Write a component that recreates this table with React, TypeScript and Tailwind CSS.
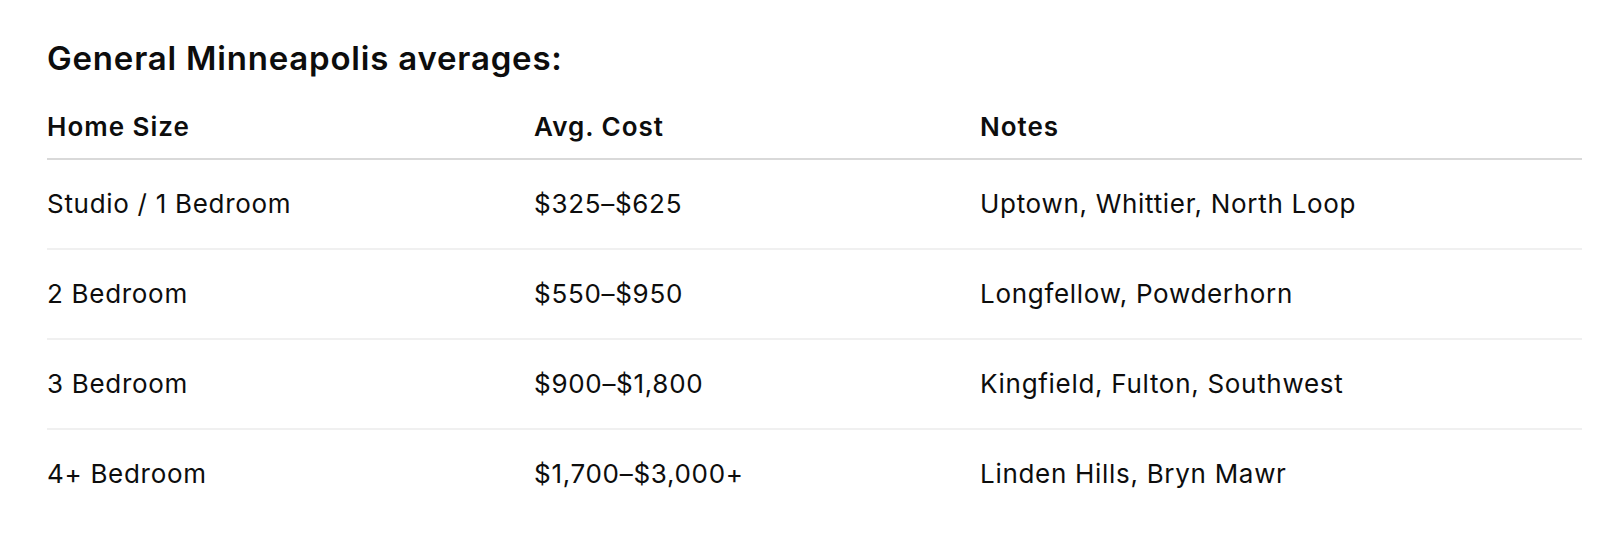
export default function App() {
  const rows = [
    ["Studio / 1 Bedroom", "$325–$625", "Uptown, Whittier, North Loop"],
    ["2 Bedroom", "$550–$950", "Longfellow, Powderhorn"],
    ["3 Bedroom", "$900–$1,800", "Kingfield, Fulton, Southwest"],
    ["4+ Bedroom", "$1,700–$3,000+", "Linden Hills, Bryn Mawr"],
  ];
  return (
    <div
      className="bg-white w-[1604px] h-[554px] pl-[47px] pr-[22px] pt-[38px] text-[#0d0d0d]"
      style={{ fontFamily: "Inter, 'Liberation Sans', sans-serif" }}
    >
      <h2 className="text-[33px] leading-[40px] font-semibold tracking-[0.8px]">
        General Minneapolis averages:
      </h2>
      <table className="w-full mt-[18px] border-collapse">
        <thead>
          <tr className="border-b-2 border-[#d9d9d9]">
            <th className="text-left font-semibold text-[26px] tracking-[1px] w-[487px] py-[13px] leading-[36px]">Home Size</th>
            <th className="text-left font-semibold text-[26px] tracking-[1px] w-[446px] py-[13px] leading-[36px]">Avg. Cost</th>
            <th className="text-left font-semibold text-[26px] tracking-[1px] py-[13px] leading-[36px]">Notes</th>
          </tr>
        </thead>
        <tbody>
          {rows.map((r, i) => (
            <tr key={i} className={i < rows.length - 1 ? "border-b-2 border-[#f0f0f0]" : ""}>
              {r.map((c, j) => (
                <td key={j} className="py-[26px] leading-[36px] text-[26px] tracking-[0.7px] font-normal">
                  {c}
                </td>
              ))}
            </tr>
          ))}
        </tbody>
      </table>
    </div>
  );
}
